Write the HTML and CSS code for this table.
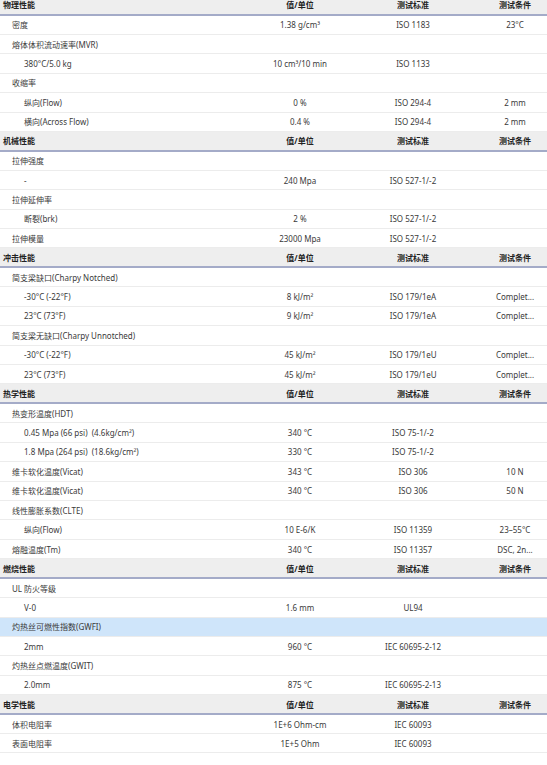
FILE: index.html
```html
<!DOCTYPE html>
<html lang="zh-CN">
<head>
<meta charset="utf-8">
<title>物性表</title>
<link rel="stylesheet" href="styles.css">
</head>
<body>
<table class="props">
<colgroup><col class="c-name"><col class="c-val"><col class="c-std"><col class="c-cond"></colgroup>
<tbody>
<tr class="sec"><td class="l0">物理性能</td><td>值/单位</td><td>测试标准</td><td>测试条件</td></tr>
<tr><td class="l1">密度</td><td>1.38 g/cm³</td><td>ISO 1183</td><td>23°C</td></tr>
<tr><td class="l1">熔体体积流动速率(MVR)</td><td></td><td></td><td></td></tr>
<tr><td class="l2">380°C/5.0 kg</td><td>10 cm³/10 min</td><td>ISO 1133</td><td></td></tr>
<tr><td class="l1">收缩率</td><td></td><td></td><td></td></tr>
<tr><td class="l2">纵向(Flow)</td><td>0 %</td><td>ISO 294-4</td><td>2 mm</td></tr>
<tr><td class="l2">横向(Across Flow)</td><td>0.4 %</td><td>ISO 294-4</td><td>2 mm</td></tr>

<tr class="sec"><td class="l0">机械性能</td><td>值/单位</td><td>测试标准</td><td>测试条件</td></tr>
<tr><td class="l1">拉伸强度</td><td></td><td></td><td></td></tr>
<tr><td class="l2">-</td><td>240 Mpa</td><td>ISO 527-1/-2</td><td></td></tr>
<tr><td class="l1">拉伸延伸率</td><td></td><td></td><td></td></tr>
<tr><td class="l2">断裂(brk)</td><td>2 %</td><td>ISO 527-1/-2</td><td></td></tr>
<tr><td class="l1">拉伸模量</td><td>23000 Mpa</td><td>ISO 527-1/-2</td><td></td></tr>

<tr class="sec"><td class="l0">冲击性能</td><td>值/单位</td><td>测试标准</td><td>测试条件</td></tr>
<tr><td class="l1">简支梁缺口(Charpy Notched)</td><td></td><td></td><td></td></tr>
<tr><td class="l2">-30°C (-22°F)</td><td>8 kJ/m²</td><td>ISO 179/1eA</td><td>Complet...</td></tr>
<tr><td class="l2">23°C (73°F)</td><td>9 kJ/m²</td><td>ISO 179/1eA</td><td>Complet...</td></tr>
<tr><td class="l1">简支梁无缺口(Charpy Unnotched)</td><td></td><td></td><td></td></tr>
<tr><td class="l2">-30°C (-22°F)</td><td>45 kJ/m²</td><td>ISO 179/1eU</td><td>Complet...</td></tr>
<tr><td class="l2">23°C (73°F)</td><td>45 kJ/m²</td><td>ISO 179/1eU</td><td>Complet...</td></tr>

<tr class="sec"><td class="l0">热学性能</td><td>值/单位</td><td>测试标准</td><td>测试条件</td></tr>
<tr><td class="l1">热变形温度(HDT)</td><td></td><td></td><td></td></tr>
<tr><td class="l2">0.45 Mpa (66 psi)&nbsp;&nbsp;(4.6kg/cm²)</td><td>340 °C</td><td>ISO 75-1/-2</td><td></td></tr>
<tr><td class="l2">1.8 Mpa (264 psi)&nbsp;&nbsp;(18.6kg/cm²)</td><td>330 °C</td><td>ISO 75-1/-2</td><td></td></tr>
<tr><td class="l1">维卡软化温度(Vicat)</td><td>343 °C</td><td>ISO 306</td><td>10 N</td></tr>
<tr><td class="l1">维卡软化温度(Vicat)</td><td>340 °C</td><td>ISO 306</td><td>50 N</td></tr>
<tr><td class="l1">线性膨胀系数(CLTE)</td><td></td><td></td><td></td></tr>
<tr><td class="l2">纵向(Flow)</td><td>10 E-6/K</td><td>ISO 11359</td><td>23–55°C</td></tr>
<tr><td class="l1">熔融温度(Tm)</td><td>340 °C</td><td>ISO 11357</td><td>DSC, 2n...</td></tr>

<tr class="sec"><td class="l0">燃烧性能</td><td>值/单位</td><td>测试标准</td><td>测试条件</td></tr>
<tr><td class="l1">UL 防火等级</td><td></td><td></td><td></td></tr>
<tr><td class="l2">V-0</td><td>1.6 mm</td><td>UL94</td><td></td></tr>
<tr class="hl"><td class="l1">灼热丝可燃性指数(GWFI)</td><td></td><td></td><td></td></tr>
<tr><td class="l2">2mm</td><td>960 °C</td><td>IEC 60695-2-12</td><td></td></tr>
<tr><td class="l1">灼热丝点燃温度(GWIT)</td><td></td><td></td><td></td></tr>
<tr><td class="l2">2.0mm</td><td>875 °C</td><td>IEC 60695-2-13</td><td></td></tr>

<tr class="sec"><td class="l0">电学性能</td><td>值/单位</td><td>测试标准</td><td>测试条件</td></tr>
<tr><td class="l1">体积电阻率</td><td>1E+6 Ohm-cm</td><td>IEC 60093</td><td></td></tr>
<tr><td class="l1">表面电阻率</td><td>1E+5 Ohm</td><td>IEC 60093</td><td></td></tr>
</tbody>
</table>
</body>
</html>
```

FILE: styles.css
```css
html, body {
  margin: 0;
  padding: 0;
  background: #ffffff;
}

body {
  font-family: "Noto Sans", "Noto Sans CJK SC", sans-serif;
  font-size: 8px;
  color: #3a3a3a;
  overflow: hidden;
}

.props {
  width: 547px;
  margin-top: -5px;
  border-collapse: collapse;
  table-layout: fixed;
}

.c-name { width: 257px; }
.c-val { width: 86px; }
.c-std { width: 140px; }
.c-cond { width: 64px; }

.props td {
  height: 19.43px;
  padding: 0;
  line-height: 11px;
  border-bottom: 1px solid #ececec;
  text-align: center;
  white-space: nowrap;
  overflow: hidden;
  text-overflow: ellipsis;
  box-sizing: border-box;
}

.props td:nth-child(4) {
  padding: 0 10px;
}

.props td.l0 {
  text-align: left;
  padding-left: 3px;
}

.props td.l1 {
  text-align: left;
  padding-left: 12px;
}

.props td.l2 {
  text-align: left;
  padding-left: 24px;
}

.sec td {
  background: #eeeeee;
  font-weight: 700;
  color: #222222;
  border-top: 1px solid #b9bfd6;
  border-bottom: 2px solid #a4abc8;
}

.hl td {
  background: #cfe5fa;
}
```
